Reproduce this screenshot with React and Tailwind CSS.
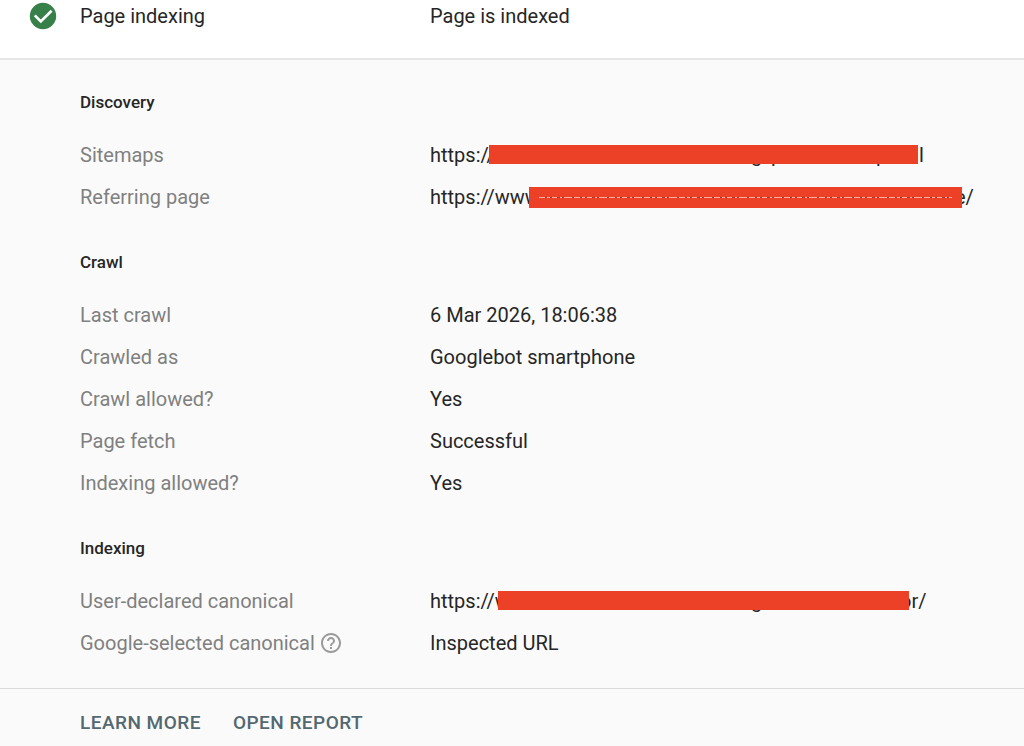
const sections = [
  {
    title: 'Discovery',
    rows: [
      {
        label: 'Sitemaps',
        redacted: {
          head: 'https://',
          tail: 'l',
          bar: 'left-[59px] w-[429px] h-[19px]',
          tailAt: 'left-[489px]',
          marks: [['g', 'left-[321px]'], ['p', 'left-[341px]'], ['p', 'left-[446px]']],
        },
      },
      {
        label: 'Referring page',
        redacted: {
          head: 'https://www',
          tail: 'e/',
          bar: 'left-[99px] w-[433px] h-[21px]',
          tailAt: 'left-[525px]',
          marks: [['g', 'left-[321px]'], ['p', 'left-[459px]'], ['p', 'left-[493px]'], ['g', 'left-[514px]']],
          dashed: true,
        },
      },
    ],
  },
  {
    title: 'Crawl',
    rows: [
      { label: 'Last crawl', value: '6 Mar 2026, 18:06:38' },
      { label: 'Crawled as', value: 'Googlebot smartphone' },
      { label: 'Crawl allowed?', value: 'Yes' },
      { label: 'Page fetch', value: 'Successful' },
      { label: 'Indexing allowed?', value: 'Yes' },
    ],
  },
  {
    title: 'Indexing',
    rows: [
      {
        label: 'User-declared canonical',
        redacted: {
          head: 'https://w',
          tail: 'or/',
          bar: 'left-[68px] w-[411px] h-[19px]',
          tailAt: 'left-[470px]',
          marks: [['g', 'left-[321px]']],
        },
      },
      { label: 'Google-selected canonical', value: 'Inspected URL', help: true },
    ],
  },
]

export default function App() {
  return (
    <main className="min-h-screen bg-[#fafafa] font-[Roboto,sans-serif] text-[20px] leading-6 text-[#262626]">
      <header className="grid grid-cols-[350px_1fr] border-b-2 border-[#e6e6e6] bg-white pb-[26px] pl-20">
        <h1 className="relative flex h-8 items-center">
          <CheckIcon />
          Page indexing
        </h1>
        <p className="flex h-8 items-center">Page is indexed</p>
      </header>

      <div className="flex flex-col gap-[23px] pt-[21px] pb-6 pl-20">
        {sections.map((section) => (
          <section key={section.title}>
            <h2 className="mb-[11px] flex h-[42px] items-center text-[17px] font-medium">{section.title}</h2>
            <dl>
              {section.rows.map((row) => (
                <div key={row.label} className="grid h-[42px] grid-cols-[350px_1fr] items-center">
                  <dt className="flex items-center gap-1 text-[#808080]">
                    {row.label}
                    {row.help && <HelpButton />}
                  </dt>
                  <dd>{row.redacted ? <Redacted {...row.redacted} /> : row.value}</dd>
                </div>
              ))}
            </dl>
          </section>
        ))}
      </div>

      <footer className="flex gap-8 border-t border-[#dadada] pt-[22px] pl-20 text-[19px] font-medium tracking-wide text-[#546870]">
        <a href="#learn">LEARN MORE</a>
        <a href="#report">OPEN REPORT</a>
      </footer>
    </main>
  )
}

// Covered part of a URL; only the descenders stay visible below the bar
function Redacted({ head, tail, bar, tailAt, marks, dashed = false }) {
  return (
    <div className="relative">
      {head}
      {marks.map(([letter, at]) => (
        <span key={at} className={`absolute top-0 ${at}`} aria-hidden="true">{letter}</span>
      ))}
      <span className={`absolute top-0 ${tailAt}`}>{tail}</span>
      <span className={`absolute top-0.5 flex items-center bg-[#ec4127] px-2.5 ${bar}`}>
        {dashed && (
          <svg className="h-px w-full" aria-hidden="true">
            <path d="M0 .5h413" stroke="#a83a2c" />
            <path d="M0 .5h413" stroke="#ffb0a4" strokeDasharray="6 2 3 2 5 3 2 2 8 2" />
          </svg>
        )}
      </span>
    </div>
  )
}

function CheckIcon() {
  return (
    <svg viewBox="0 0 28 28" className="absolute -left-[51px] size-7" aria-hidden="true">
      <circle cx="14" cy="14" r="13.2" fill="#38804a" />
      <path d="M5.800 13.400l6 6L22.600 8.800" fill="none" stroke="#fff" strokeWidth="2.700" />
    </svg>
  )
}

function HelpButton() {
  return (
    <button type="button" aria-label="Help" className="text-[#9a9a9a]">
      <svg viewBox="0 0 24 24" className="size-6" fill="currentColor" aria-hidden="true">
        <path d="M11 18h2v-2h-2v2zm1-16C6.480 2 2 6.480 2 12s4.480 10 10 10 10-4.480 10-10S17.520 2 12 2zm0 18c-4.410 0-8-3.590-8-8s3.590-8 8-8 8 3.590 8 8-3.590 8-8 8zm0-14c-2.210 0-4 1.790-4 4h2c0-1.100.9-2 2-2s2 .9 2 2c0 2-3 1.750-3 5h2c0-2.250 3-2.500 3-5 0-2.210-1.790-4-4-4z" />
      </svg>
    </button>
  )
}
